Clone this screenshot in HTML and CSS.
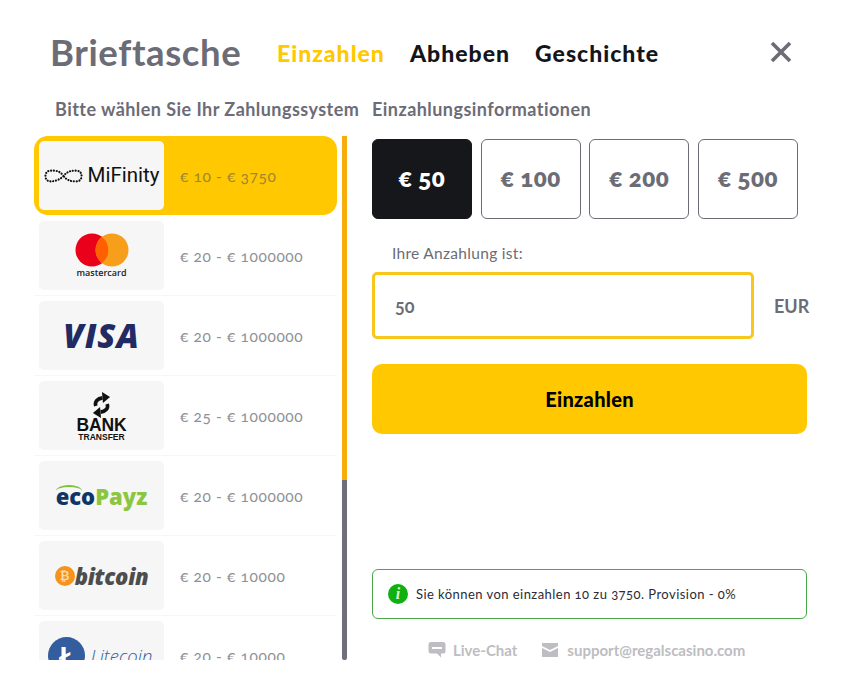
FILE: index.html
```html
<!DOCTYPE html>
<html lang="de">
<head>
<meta charset="utf-8">
<title>Brieftasche</title>
<link rel="stylesheet" href="styles.css">
</head>
<body>
<main class="wallet">
  <header class="top">
    <h1 class="title">Brieftasche</h1>
    <nav class="tabs">
      <a class="tab active">Einzahlen</a>
      <a class="tab">Abheben</a>
      <a class="tab">Geschichte</a>
    </nav>
    <svg class="close" viewBox="0 0 22 22"><path d="M2 2L20 20M20 2L2 20" fill="none" stroke="#6c6c76" stroke-width="3.6"/></svg>
  </header>
  <div class="columns">
    <section class="left">
      <h2 class="sub sub-left">Bitte wählen Sie Ihr Zahlungssystem</h2>
      <div class="picker">
        <div class="list">
          <div class="row selected">
            <div class="logo">
              <svg class="mif" viewBox="0 0 40 16"><path d="M20 8C16 2 11 2.500 7 2.500C3 2.500 1.500 5 1.500 8C1.500 11 3 13.500 7 13.500C11 13.500 16 12 20 8C24 3 28 2.500 33 2.500C37 2.500 38.500 5 38.500 8C38.500 11 37 13.500 33 13.500C28 13.500 24 13 20 8Z" fill="none" stroke="#111" stroke-width="2.200" stroke-linecap="round" stroke-dasharray=".1 2.800"/></svg>
              <span class="mif-text">MiFinity</span>
            </div>
            <span class="range">€ 10 - € 3750</span>
          </div>
          <div class="row">
            <div class="logo logo-col">
              <svg class="mc" viewBox="0 0 54 34"><circle cx="17" cy="17" r="16.500" fill="#eb001b"/><circle cx="37" cy="17" r="16.500" fill="#f79e1b"/><path d="M27 4a16.500 16.500 0 0 1 0 26a16.500 16.500 0 0 1 0-26Z" fill="#ff5f00"/></svg>
              <span class="mc-text">mastercard</span>
            </div>
            <span class="range">€ 20 - € 1000000</span>
          </div>
          <div class="row">
            <div class="logo"><span class="visa">VISA</span></div>
            <span class="range">€ 20 - € 1000000</span>
          </div>
          <div class="row">
            <div class="logo logo-col logo-bank">
              <svg class="bank-arrows" viewBox="0 0 22 27"><path d="M5 14.500C3.500 10 7 6.500 12 6" fill="none" stroke="#111" stroke-width="3.800"/><path d="M11.500 0L20 5L12.500 11.500Z" fill="#111"/><path d="M17 12.500C18.500 17 15 20.500 10 21" fill="none" stroke="#111" stroke-width="3.800"/><path d="M10.500 27L2 22L9.500 15.500Z" fill="#111"/></svg>
              <span class="bank-a">BANK</span>
              <span class="bank-b">TRANSFER</span>
            </div>
            <span class="range">€ 25 - € 1000000</span>
          </div>
          <div class="row">
            <div class="logo"><span class="eco">eco</span><span class="payz">Payz</span></div>
            <span class="range">€ 20 - € 1000000</span>
          </div>
          <div class="row">
            <div class="logo">
              <span class="btc-coin">₿</span><span class="btc">bitcoin</span>
            </div>
            <span class="range">€ 20 - € 10000</span>
          </div>
          <div class="row">
            <div class="logo">
              <span class="ltc-coin">Ł</span><span class="ltc">Litecoin</span>
            </div>
            <span class="range">€ 20 - € 10000</span>
          </div>
        </div>
        <div class="track"><div class="thumb"></div></div>
      </div>
    </section>
    <section class="right">
      <h2 class="sub">Einzahlungsinformationen</h2>
      <div class="amounts">
        <button class="amount on">€ 50</button>
        <button class="amount">€ 100</button>
        <button class="amount">€ 200</button>
        <button class="amount">€ 500</button>
      </div>
      <label class="field-label" for="sum">Ihre Anzahlung ist:</label>
      <div class="field-row">
        <input id="sum" class="field" value="50">
        <span class="cur">EUR</span>
      </div>
      <button class="submit">Einzahlen</button>
      <div class="note">
        <span class="note-icon">i</span>
        <span class="note-text">Sie können von einzahlen 10 zu 3750. Provision - 0%</span>
      </div>
      <footer class="contact">
        <svg class="c-chat" viewBox="0 0 18 18"><path d="M3 1H15A2.500 2.500 0 0 1 17.500 3.500V10A2.500 2.500 0 0 1 15 12.500H13V16.500L9 12.500H3A2.500 2.500 0 0 1 .5 10V3.500A2.500 2.500 0 0 1 3 1Z" fill="#bdbdc2"/><rect x="4" y="6" width="10" height="2" fill="#fff"/></svg>
        <span class="c-text c-live">Live-Chat</span>
        <svg class="c-mail" viewBox="0 0 16 16"><path d="M0 1H16V4L8 8L0 4Z" fill="#bdbdc2"/><path d="M0 6L8 10L16 6V15H0Z" fill="#bdbdc2"/></svg>
        <span class="c-text">support@regalscasino.com</span>
      </footer>
    </section>
  </div>
</main>
</body>
</html>
```
FILE: styles.css
```css
* { box-sizing: border-box; }
html, body { margin: 0; padding: 0; background: #fff; }
body {
  width: 850px;
  height: 700px;
  overflow: hidden;
  font-family: Lato, "Open Sans", sans-serif;
  font-variant-numeric: oldstyle-nums;
  color: #6c6c76;
}
.wallet { padding: 28px 0 0 34px; }
.top { display: flex; align-items: center; width: 758px; height: 48px; padding-left: 16px; }
.title { margin: 0; width: 227px; font-size: 36.500px; line-height: 48px; font-weight: 700; color: #6c6c76; letter-spacing: .6px; }
.tabs { display: flex; gap: 25px; margin-top: 2px; }
.tab { font-size: 23px; font-weight: 900; color: #14151a; letter-spacing: 1px; line-height: 48px; }
.tab.active { color: #ffc800; }
.close { width: 22px; height: 22px; margin-left: auto; margin-top: -1px; }
.columns { display: flex; margin-top: 21px; }
.left { width: 338px; }
.sub { margin: 0; font-size: 18px; line-height: 24px; font-weight: 700; color: #6c6c76; letter-spacing: .45px; }
.sub-left { padding-left: 21px; white-space: nowrap; }
.picker { display: flex; margin-top: 15px; gap: 5px; }
.list { width: 303px; height: 524px; overflow: hidden; flex: none; }
.row { display: flex; align-items: center; height: 80px; padding: 5px; border-bottom: 1px solid #f7f7f7; }
.row.selected { height: 79px; margin-bottom: 1px; background: #ffc800; border: 0; border-radius: 14px; }
.logo {
  display: flex; align-items: center; justify-content: center;
  width: 125px; height: 69px; flex: none;
  background: #f6f6f6; border-radius: 5px;
}
.logo-col { flex-direction: column; }
.logo-bank { padding-top: 2px; }
.range { margin-left: 16px; font-size: 15.500px; font-weight: 400; letter-spacing: .6px; color: #8f8f96; white-space: nowrap; }
.selected .range { color: #9d8635; }
.track { width: 5px; height: 524px; background: #6f6f79; border-radius: 0 0 2px 2px; flex: none; }
.thumb { height: 344px; background: #f7ae0c; }
.mif { width: 39px; height: 16px; }
.mif-text { margin-left: 5px; font-family: Roboto, sans-serif; font-size: 20.500px; line-height: 1; color: #111; font-variant-numeric: normal; }
.mc { width: 54px; height: 34px; }
.mc-text { margin-top: 1px; font-family: "Open Sans", sans-serif; font-size: 9px; line-height: 10px; font-weight: 600; color: #222; }
.visa { font-family: "Open Sans", sans-serif; font-size: 33px; line-height: 1; font-weight: 800; font-style: italic; color: #222a64; letter-spacing: 1px; }
.bank-arrows { width: 21px; height: 26px; }
.bank-a { font-family: "Liberation Sans", sans-serif; font-size: 17.500px; line-height: 15px; font-weight: 700; color: #111; letter-spacing: -.2px; }
.bank-b { font-family: "Liberation Sans", sans-serif; font-size: 8.500px; line-height: 9px; font-weight: 700; color: #111; }
.eco { position: relative; font-family: "Open Sans", sans-serif; font-size: 22px; font-weight: 800; color: #0f3566; }
.eco::before {
  content: ""; position: absolute; left: 0; top: 4px; width: 26px; height: 10px;
  border-top: 2px solid #7dc03a; border-radius: 50%;
}
.payz { font-family: "Open Sans", sans-serif; font-size: 22px; font-weight: 800; color: #8cc63f; }
.btc-coin {
  display: flex; align-items: center; justify-content: center;
  width: 20px; height: 20px; border-radius: 50%;
  background: #f7931a; color: #fbd9a8; font-size: 12px; font-weight: 700; font-family: "DejaVu Sans", sans-serif;
}
.btc { font-family: "Open Sans", sans-serif; font-size: 22px; line-height: 1; font-weight: 800; font-style: italic; color: #4d4d4d; letter-spacing: -.3px; }
.ltc-coin {
  display: flex; align-items: center; justify-content: center;
  width: 37px; height: 37px; border-radius: 50%;
  background: #345d9d; color: #fff; font-size: 27px; font-weight: 900;
  margin-right: 6px;
}
.ltc { margin-right: 3px; font-family: "Open Sans", sans-serif; font-size: 18.500px; font-weight: 300; font-style: italic; color: #345d9d; }
.right { width: 435px; display: flex; flex-direction: column; align-items: flex-start; }
.amounts { display: flex; justify-content: space-between; width: 426px; margin-top: 18px; }
.amount {
  width: 100px; height: 80px; padding: 0 0 4px;
  font-family: inherit; font-variant-numeric: inherit; font-size: 24px; font-weight: 800; letter-spacing: .5px; color: #6c6c76;
  background: #fff; border: 1px solid #6c6c76; border-radius: 6px;
}
.amount.on { background: #16171b; color: #fff; border-color: #16171b; }
.field-label { margin: 24px 0 0 20px; font-size: 15.500px; line-height: 20px; letter-spacing: .3px; color: #6c6c76; }
.field-row { display: flex; align-items: center; margin-top: 9px; }
.field {
  width: 382px; height: 67px; padding: 0 20px;
  font-family: inherit; font-variant-numeric: inherit; font-size: 18px; font-weight: 700; color: #6c6c76;
  background: #fff; border: 3px solid #f7c71c; border-radius: 5px; outline: 0;
}
.cur { margin-left: 20px; font-size: 18px; font-weight: 700; color: #6c6c76; }
.submit {
  width: 435px; height: 70px; margin-top: 25px; padding: 0;
  font-family: inherit; font-size: 20px; font-weight: 900; letter-spacing: .3px; color: #000;
  background: #ffc800; border: 0; border-radius: 10px;
}
.note {
  display: flex; align-items: center; width: 435px; height: 50px; margin-top: 135px; padding: 0 15px;
  border: 1px solid #4aa84a; border-radius: 6px;
}
.note-icon {
  display: flex; align-items: center; justify-content: center;
  width: 20px; height: 20px; border-radius: 50%;
  background: #10b010; color: #d9f5d0; font-family: "Liberation Serif", serif; font-style: italic; font-weight: 700; font-size: 16px;
}
.note-text { margin-left: 8px; font-size: 13px; letter-spacing: .45px; color: #2b2b33; }
.contact { display: flex; align-items: center; margin-top: 21px; padding-left: 56px; height: 20px; }
.c-chat { width: 18px; height: 18px; }
.c-live { margin-left: 7px; }
.c-mail { width: 16px; height: 16px; margin-left: 25px; }
.c-text { font-size: 15px; font-weight: 700; color: #bdbdc2; }
.c-mail + .c-text { margin-left: 9px; }
```
